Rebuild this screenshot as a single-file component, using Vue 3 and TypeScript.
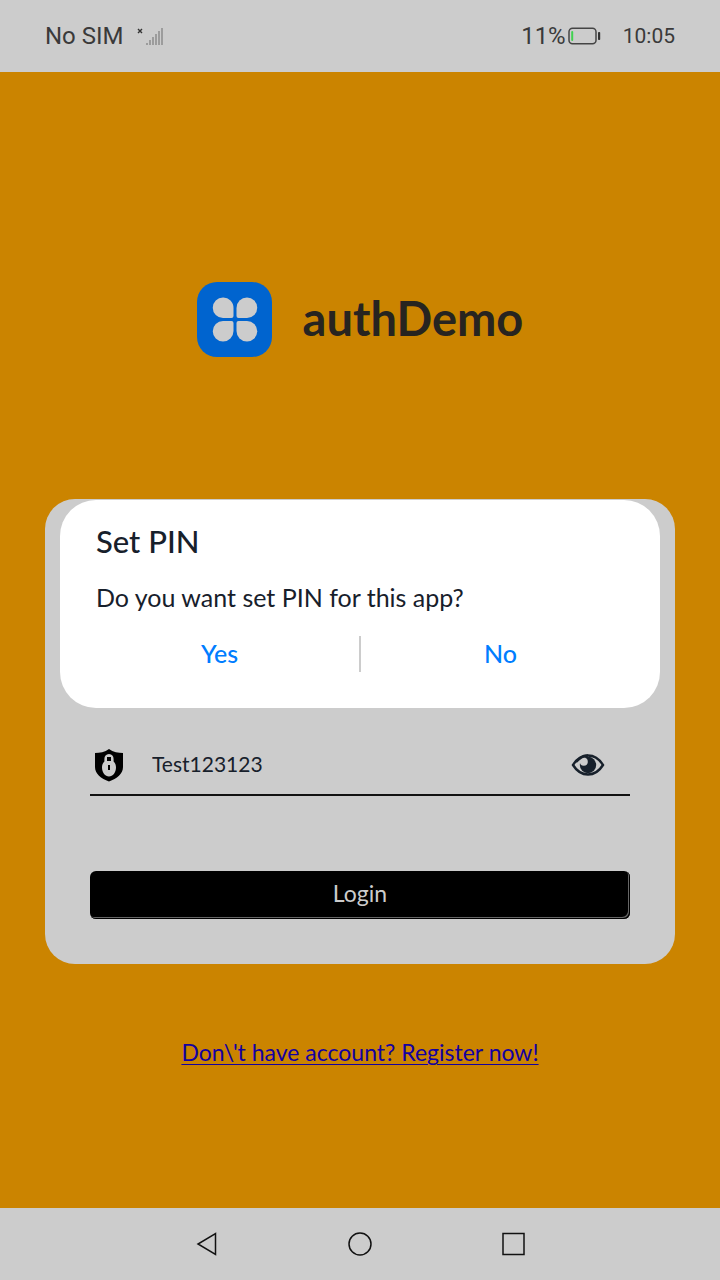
<script setup lang="ts">
import { ref } from 'vue'

const password = ref('Test123123')
const masked = ref(false)
const signalBars = [2, 5, 8, 11, 14, 17]
</script>

<template>
  <div class="screen">
    <header class="status">
      <span class="carrier">No SIM</span>
      <svg class="signal" width="28" height="20" viewBox="0 0 28 20" aria-hidden="true">
        <path d="M2 3l4 4M6 3l-4 4" stroke="#333" stroke-width="1.4" />
        <rect
          v-for="(h, i) in signalBars"
          :key="h"
          :x="10 + i * 3"
          :y="19 - h"
          width="2"
          :height="h"
          fill="#9c9c9c"
        />
      </svg>
      <span class="battery-level">11%</span>
      <svg class="battery" width="34" height="18" viewBox="0 0 34 18" aria-hidden="true">
        <rect x="1" y="1.25" width="27" height="15.5" rx="3.5" fill="none" stroke="#444" stroke-width="1.5" />
        <rect x="3.200" y="4" width="2" height="10" rx="1" fill="#41d150" />
        <rect x="30" y="5" width="2.2" height="8" rx="0.8" fill="#333" />
      </svg>
      <time class="clock">10:05</time>
    </header>

    <main class="content">
      <div class="brand">
        <svg class="logo" width="75" height="75" viewBox="0 0 75 75" aria-hidden="true">
          <rect width="75" height="75" rx="20" fill="#0064cf" />
          <g fill="#ccc">
            <path d="M26 15.500a10.250 10.250 0 0 1 10.500 10.500v8a2 2 0 0 1-2 2H26a10.250 10.250 0 0 1 0-20.500z" />
            <path d="M50 15.500a10.250 10.250 0 0 1 0 20.500h-8.500a2 2 0 0 1-2-2v-8a10.500 10.500 0 0 1 10.500-10.500z" />
            <path d="M26 59.500a10.250 10.250 0 0 1 0-20.500h8.500a2 2 0 0 1 2 2v8a10.500 10.500 0 0 1-10.500 10.500z" />
            <path d="M50 59.500a10.500 10.500 0 0 1-10.500-10.500v-8a2 2 0 0 1 2-2H50a10.250 10.250 0 0 1 0 20.500z" />
          </g>
        </svg>
        <h1>authDemo</h1>
      </div>

      <div class="card">
        <form class="login" @submit.prevent>
          <div class="field">
            <label for="password" aria-label="Password">
              <svg width="30" height="34" viewBox="0 0 30 34" aria-hidden="true">
                <path d="M15 1C11 4 5.500 5 1 5v14c0 7 6 11.500 14 14.500C23 30.500 29 26 29 19V5C24.500 5 19 4 15 1z" fill="#000" />
                <path d="M15 6c-3 0-4.600 2.200-4.600 5v2.500C8.700 15 8 17 8 19.500c0 5 3.200 9 7 9s7-4 7-9c0-2.500-.7-4.500-2.400-6V11c0-2.800-1.600-5-4.600-5z" fill="#ccc" />
                <path d="M13 9h4v4h-4zM14 17h2v5h-2z" fill="#000" />
              </svg>
            </label>
            <input id="password" v-model="password" :type="masked ? 'password' : 'text'" />
            <button class="reveal" type="button" aria-label="Show password" @click="masked = !masked">
              <svg width="34" height="24" viewBox="0 0 34 24" aria-hidden="true">
                <path d="M2 12C6 5.500 11 2.500 17 2.500S28 5.500 32 12C28 18.500 23 21.500 17 21.500S6 18.500 2 12z" fill="none" stroke="#17202b" stroke-width="2.400" />
                <circle cx="17" cy="12" r="8.200" fill="#17202b" />
                <circle cx="12.800" cy="8.700" r="4" fill="#ccc" />
                <path d="M5 9C9 4.500 13 2.500 17 2.500" fill="none" stroke="#17202b" stroke-width="2.400" />
              </svg>
            </button>
          </div>
          <button class="submit" type="submit">Login</button>
        </form>

        <section class="dialog" role="dialog" aria-labelledby="dialog-title">
          <h2 id="dialog-title">Set PIN</h2>
          <p>Do you want set PIN for this app?</p>
          <div class="actions">
            <button type="button">Yes</button>
            <button type="button">No</button>
          </div>
        </section>
      </div>

      <a class="register" href="#register">Don\'t have account? Register now!</a>
    </main>

    <nav class="system-nav" aria-label="System">
      <button type="button" aria-label="Back">
        <svg width="26" height="26" viewBox="0 0 26 26"><path d="M21.500 2.500v21L4 13z" /></svg>
      </button>
      <button type="button" aria-label="Home">
        <svg width="26" height="26" viewBox="0 0 26 26"><circle cx="13" cy="13" r="11" /></svg>
      </button>
      <button type="button" aria-label="Recent apps">
        <svg width="26" height="26" viewBox="0 0 26 26"><path d="M3 2.500h21v21H3z" /></svg>
      </button>
    </nav>
  </div>
</template>

<style>
body {
  margin: 0;
  background: #cb8400;
}
</style>

<style scoped>
.screen {
  display: flex;
  flex-direction: column;
  min-height: 100vh;
  background: #cb8400;
  font-family: Lato, "Liberation Sans", sans-serif;
  color: #17202b;
}

button,
input {
  font: inherit;
  border: 0;
  padding: 0;
  background: none;
  color: inherit;
}

button {
  cursor: pointer;
}

svg {
  display: block;
}

.status {
  display: flex;
  align-items: center;
  height: 72px;
  padding: 0 45px;
  background: #ccc;
  color: #3a3a3a;
  font-family: Roboto, sans-serif;
  font-size: 24px;
}

.signal {
  margin-left: 12px;
}

.battery-level {
  margin-left: auto;
  margin-right: 2px;
}

.clock {
  margin-left: 21px;
  font-size: 21px;
}

.content {
  flex: 1;
  display: flex;
  flex-direction: column;
  align-items: center;
  padding: 210px 45px 140px;
}

.brand {
  display: flex;
  align-items: center;
  gap: 31px;
}

h1 {
  margin: 0;
  padding-bottom: 4px;
  color: #272420;
  font-size: 47px;
  line-height: 60px;
  font-weight: 700;
}

.card {
  position: relative;
  display: flex;
  flex-direction: column;
  justify-content: flex-end;
  align-self: stretch;
  box-sizing: border-box;
  min-height: 465px;
  margin-top: 142px;
  padding: 45px;
  border-radius: 30px;
  background: #ccc;
}

.login {
  display: flex;
  flex-direction: column;
  gap: 75px;
}

.field {
  display: flex;
  align-items: center;
  height: 58px;
  padding: 4px 25px 0 4px;
  border-bottom: 2px solid #111;
}

.field input {
  flex: 1;
  min-width: 0;
  margin-left: 28px;
  padding-bottom: 4px;
  font-size: 21px;
  outline: none;
}

.submit {
  height: 48px;
  padding-bottom: 4px;
  border-radius: 6px;
  background: #000;
  box-shadow: inset -1px -1px #000, inset -2px -2px #666;
  color: #ccc;
  font-size: 23px;
}

.dialog {
  position: absolute;
  top: 1px;
  left: 15px;
  right: 15px;
  box-sizing: border-box;
  padding: 21px 20px 36px;
  border-radius: 36px;
  background: #fff;
}

h2 {
  margin: 0 16px;
  font-size: 31px;
  line-height: 40px;
  font-weight: 500;
}

p {
  margin: 20px 16px 23px;
  font-size: 25px;
  line-height: 32px;
}

.actions {
  display: flex;
}

.actions button {
  flex: 1;
  height: 36px;
  padding-bottom: 2px;
  color: #007dff;
  font-size: 25px;
  font-weight: 500;
}

.actions button + button {
  border-left: 2px solid #ccc;
}

.register {
  margin-top: 72px;
  color: #1400a0;
  font-size: 23px;
  line-height: 32px;
  text-decoration-thickness: 1px;
  text-underline-offset: 3px;
}

.system-nav {
  display: flex;
  justify-content: center;
  align-items: center;
  gap: 127px;
  height: 72px;
  background: #ccc;
}

.system-nav svg {
  fill: none;
  stroke: #111;
  stroke-width: 1.5;
}
</style>
